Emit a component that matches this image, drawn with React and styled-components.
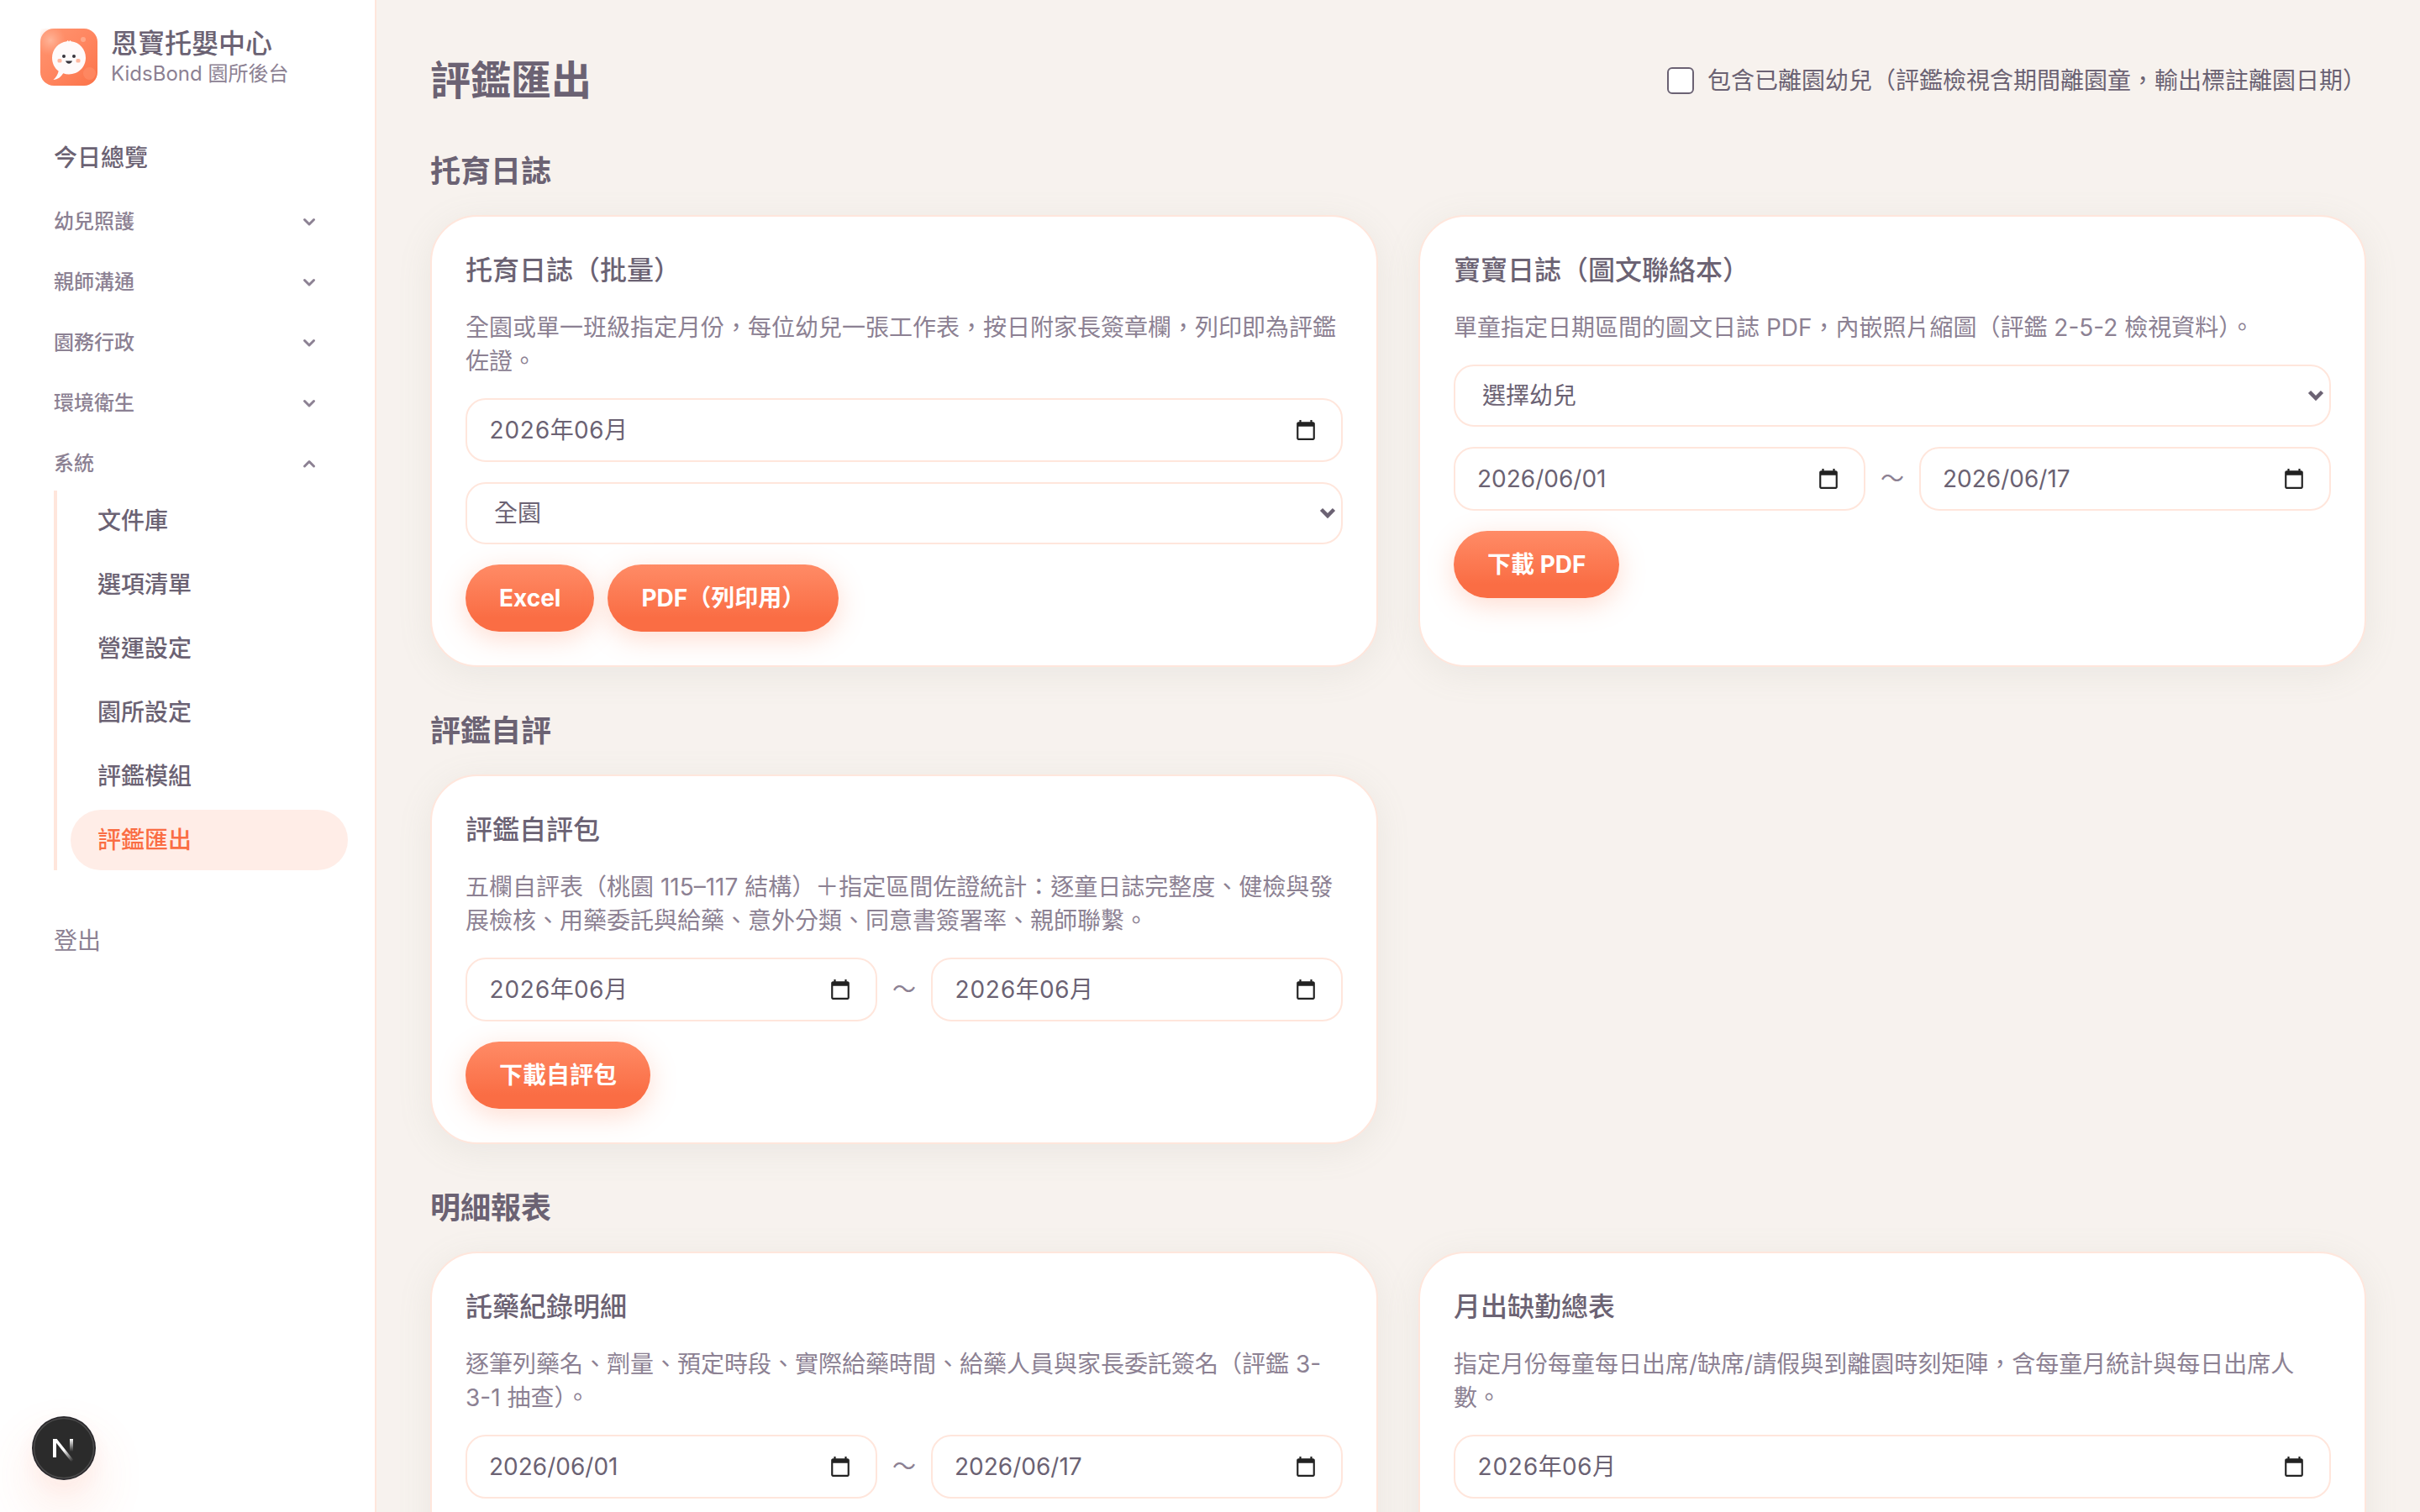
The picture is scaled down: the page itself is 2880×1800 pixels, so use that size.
import { useState } from "react"
import styled, { createGlobalStyle, css } from "styled-components"

const colors = {
  text: "#6b6273",
  muted: "#8c8193",
  page: "#f7f2ee",
  line: "#ffe6dc",
  activeBg: "#ffede7",
  primary: "#fa6d44",
  primaryLight: "#ff8b66",
  ink: "#222222",
}

const GlobalStyle = createGlobalStyle`
  *, *::before, *::after {
    box-sizing: border-box;
  }
  html {
    scrollbar-width: none;
  }
  body {
    margin: 0;
    background: ${colors.page};
    color: ${colors.text};
    font-family: Inter, "Noto Sans CJK TC", sans-serif;
    font-size: 28px;
    line-height: 40px;
    -webkit-font-smoothing: antialiased;
  }
  button, input, select {
    font: inherit;
    color: inherit;
  }
`

const Layout = styled.div`
  display: flex;
  align-items: flex-start;
  min-height: 100vh;
`

/* Sidebar */

const Sidebar = styled.aside`
  position: sticky;
  top: 0;
  flex: none;
  width: 448px;
  height: 100vh;
  padding: 32px;
  background: white;
  border-right: 2px solid ${colors.line};
`

const Brand = styled.div`
  display: flex;
  align-items: center;
  gap: 16px;
  padding: 0 16px;
  margin-bottom: 48px;
`

const BrandName = styled.div`
  font-size: 32px;
  line-height: 40px;
  font-weight: 500;
`

const BrandSub = styled.div`
  font-size: 24px;
  line-height: 32px;
  color: ${colors.muted};
`

const Nav = styled.nav`
  display: flex;
  flex-direction: column;
  gap: 8px;
`

const NavItem = styled.a`
  display: flex;
  align-items: center;
  height: 72px;
  padding: 0 32px;
  border-radius: 36px;
  font-weight: 500;
  text-decoration: none;
  color: ${({ $active }) => ($active ? colors.primary : colors.text)};
  background: ${({ $active }) => ($active ? colors.activeBg : "transparent")};
`

const GroupToggle = styled.button`
  display: flex;
  align-items: center;
  justify-content: space-between;
  width: 100%;
  height: 64px;
  padding: 0 32px;
  border: none;
  background: none;
  font-size: 24px;
  font-weight: 500;
  color: ${colors.muted};
  cursor: pointer;
`

const SubNav = styled.div`
  display: flex;
  flex-direction: column;
  gap: 4px;
  margin-left: 32px;
  padding-left: 16px;
  border-left: 4px solid ${colors.line};
`

const Logout = styled.button`
  display: block;
  height: 72px;
  margin-top: 48px;
  padding: 0 32px;
  border: none;
  background: none;
  color: ${colors.muted};
  cursor: pointer;
`

/* Content */

const Main = styled.main`
  flex: 1;
  min-width: 0;
  display: flex;
  flex-direction: column;
  gap: 48px;
  padding: 64px;
`

const Header = styled.header`
  display: flex;
  align-items: center;
  justify-content: space-between;
`

const PageTitle = styled.h1`
  margin: 0;
  font-size: 48px;
  line-height: 64px;
  font-weight: 600;
`

const CheckLabel = styled.label`
  display: flex;
  align-items: center;
  gap: 16px;
`

const Checkbox = styled.input`
  appearance: none;
  width: 32px;
  height: 32px;
  margin: 0;
  border: 2px solid ${colors.text};
  border-radius: 6px;
  background: white;
  &:checked {
    background: ${colors.primary};
  }
`

const SectionTitle = styled.h2`
  margin: 0 0 24px;
  font-size: 36px;
  line-height: 56px;
  font-weight: 600;
`

const CardGrid = styled.div`
  display: grid;
  grid-template-columns: repeat(2, minmax(0, 1fr));
  gap: 48px;
`

const Card = styled.article`
  display: flex;
  flex-direction: column;
  gap: 24px;
  min-height: 440px;
  padding: 40px;
  border: 2px solid ${colors.line};
  border-radius: 56px;
  background: white;
  box-shadow: 0 8px 40px rgba(150, 160, 140, 0.12);
`

const CardTitle = styled.h3`
  margin: 0;
  font-size: 32px;
  line-height: 48px;
  font-weight: 500;
`

const CardText = styled.p`
  margin: 0;
  color: ${colors.muted};
`

const fieldBox = css`
  border: 2px solid ${colors.line};
  border-radius: 24px;
  background: white;
`

const DateBox = styled.span`
  ${fieldBox}
  flex: 1;
  min-width: 0;
  display: flex;
  align-items: center;
  height: 76px;
  padding: 0 24px;
`

const DateInput = styled.input`
  flex: 1;
  min-width: 0;
  padding: 0 2px;
  border: none;
  outline: none;
  background: none;
  font-variant-numeric: ${({ $month }) => ($month ? "tabular-nums" : "normal")};
`

const PickerButton = styled.button`
  display: flex;
  padding: 0 5px;
  border: none;
  background: none;
  cursor: pointer;
`

const SelectBox = styled.span`
  display: grid;
  align-items: center;
  & > * {
    grid-area: 1 / 1;
  }
  & > svg {
    justify-self: end;
    margin-right: 8px;
    pointer-events: none;
  }
`

const SelectInput = styled.select`
  ${fieldBox}
  appearance: none;
  width: 100%;
  height: 74px;
  padding: 0 32px;
`

const FieldRow = styled.div`
  display: flex;
  align-items: center;
  gap: 16px;
`

const Tilde = styled.span`
  width: 32px;
  text-align: center;
  color: ${colors.muted};
`

const ButtonRow = styled.div`
  display: flex;
  gap: 16px;
`

const PrimaryButton = styled.button`
  height: 80px;
  padding: 0 40px;
  border: none;
  border-radius: 40px;
  background: linear-gradient(${colors.primaryLight}, ${colors.primary} 80%);
  box-shadow: 0 8px 32px rgba(255, 128, 85, 0.28);
  color: white;
  font-weight: 700;
  cursor: pointer;
`

const DevBadge = styled.button`
  position: fixed;
  left: 38px;
  bottom: 38px;
  display: flex;
  padding: 0;
  border: none;
  border-radius: 50%;
  background: none;
  box-shadow: 0 32px 64px rgba(250, 109, 68, 0.16), 0 8px 32px rgba(250, 109, 68, 0.06);
`

function Chevron({ open }) {
  return (
    <svg width="28" height="28" viewBox="0 0 28 28" fill="none" stroke="currentColor"
      strokeWidth="3" strokeLinecap="round" strokeLinejoin="round" aria-hidden="true">
      <path d={open ? "M8.500 17l5.500-5.500 5.500 5.500" : "M8.500 11.500l5.500 5.500 5.500-5.500"} />
    </svg>
  )
}

function Logo() {
  return (
    <svg width="68" height="68" viewBox="0 0 68 68" aria-hidden="true">
      <defs>
        <linearGradient id="tile" x1="0" y1="0" x2="1" y2="1">
          <stop offset="0" stopColor="#ff9671" />
          <stop offset="0.5" stopColor="#ff8660" />
          <stop offset="1" stopColor="#fb7349" />
        </linearGradient>
        <radialGradient id="glow">
          <stop offset="0" stopColor="#ffc1a8" stopOpacity="0.75" />
          <stop offset="1" stopColor="#ffb094" stopOpacity="0" />
        </radialGradient>
      </defs>
      <rect width="68" height="68" rx="16" fill="url(#tile)" />
      <circle cx="12" cy="14" r="18" fill="url(#glow)" />
      <circle cx="51" cy="13" r="3" fill="#ffb598" opacity="0.7" />
      <circle cx="58.500" cy="53.500" r="7.500" fill="#ff8f6b" opacity="0.6" />
      <path
        d="M31.500 15.200l1.200-1.200 1.300 1.600 1.500-1.600 1.200 1.200C46.800 16.300 54 24.600 54 34.800 54 46 45.200 54.500 34 54.500c-2.400 0-4.700-.4-6.800-1.200C24.600 57.800 20.600 60.800 15.500 61c3.200-2.900 5.300-6.300 6.200-10.200C17 47.200 14 41.400 14 34.800c0-10.200 7.500-18.300 17.500-19.600z"
        fill="#fffafa"
      />
      <circle cx="28" cy="33" r="2" fill="#38343c" />
      <circle cx="40" cy="33" r="2" fill="#38343c" />
      <rect x="20.500" y="36" width="5" height="4.500" rx="1.500" fill="#ffb8a0" />
      <rect x="42.500" y="36" width="5" height="4.500" rx="1.500" fill="#ffb8a0" />
      <path d="M30 38.500h8c-.6 2-2.100 3.200-4 3.200s-3.400-1.200-4-3.200z" fill="#38343c" />
    </svg>
  )
}

function NextMark() {
  return (
    <svg width="76" height="76" viewBox="0 0 76 76" aria-hidden="true">
      <defs>
        <linearGradient id="diag" x1="38" y1="40" x2="49" y2="53" gradientUnits="userSpaceOnUse">
          <stop stopColor="white" />
          <stop offset="1" stopColor="white" stopOpacity="0" />
        </linearGradient>
        <linearGradient id="stem" x1="0" y1="27" x2="0" y2="42" gradientUnits="userSpaceOnUse">
          <stop stopColor="white" />
          <stop offset="1" stopColor="white" stopOpacity="0" />
        </linearGradient>
      </defs>
      <circle cx="38" cy="38" r="38" fill="#29272b" />
      <circle cx="38" cy="38" r="35.500" fill="#2b2b2b" stroke="#4a4a4a" strokeWidth="1.500" />
      <path d="M25 49V27h4.600l20 25.200-2.800 2L29 31.800V49z" fill="url(#diag)" />
      <rect x="45" y="27" width="4" height="15" fill="url(#stem)" />
    </svg>
  )
}

function DateField({ label, value, month }) {
  return (
    <DateBox>
      <DateInput aria-label={label} defaultValue={value} $month={month} />
      <PickerButton type="button" aria-label="開啟日曆">
        <svg width="26" height="26" viewBox="0 0 24 24" fill={colors.ink} aria-hidden="true">
          <path d="M20 3h-1V1h-2v2H7V1H5v2H4c-1.100 0-2 .9-2 2v16c0 1.100.9 2 2 2h16c1.100 0 2-.9 2-2V5c0-1.100-.9-2-2-2zm0 18H4V8h16v13z" />
        </svg>
      </PickerButton>
    </DateBox>
  )
}

function RangeField({ from, to, month }) {
  return (
    <FieldRow>
      <DateField label="開始" value={from} month={month} />
      <Tilde>～</Tilde>
      <DateField label="結束" value={to} month={month} />
    </FieldRow>
  )
}

function SelectField({ label, option }) {
  return (
    <SelectBox>
      <SelectInput aria-label={label}>
        <option>{option}</option>
      </SelectInput>
      <svg width="20" height="14" viewBox="0 0 20 14" fill="none" stroke={colors.text} strokeWidth="4.500" aria-hidden="true">
        <path d="M2.500 2.500L10 10l7.500-7.500" />
      </svg>
    </SelectBox>
  )
}

function ExportCard({ title, text, children }) {
  return (
    <Card>
      <CardTitle>{title}</CardTitle>
      <CardText>{text}</CardText>
      {children}
    </Card>
  )
}

const closedGroups = ["幼兒照護", "親師溝通", "園務行政", "環境衛生"]
const systemPages = ["文件庫", "選項清單", "營運設定", "園所設定", "評鑑模組", "評鑑匯出"]

function App() {
  const [includeLeft, setIncludeLeft] = useState(false)
  const [systemOpen, setSystemOpen] = useState(true)

  return (
    <>
      <GlobalStyle />
      <Layout>
        <Sidebar>
          <Brand>
            <Logo />
            <div>
              <BrandName>恩寶托嬰中心</BrandName>
              <BrandSub>KidsBond 園所後台</BrandSub>
            </div>
          </Brand>
          <Nav>
            <NavItem href="#today">今日總覽</NavItem>
            {closedGroups.map((group) => (
              <GroupToggle key={group} type="button" aria-expanded="false">
                {group}
                <Chevron />
              </GroupToggle>
            ))}
            <div>
              <GroupToggle
                type="button"
                aria-expanded={systemOpen}
                onClick={() => setSystemOpen(!systemOpen)}
              >
                系統
                <Chevron open={systemOpen} />
              </GroupToggle>
              {systemOpen && (
                <SubNav>
                  {systemPages.map((page) => (
                    <NavItem key={page} href="#system" $active={page === "評鑑匯出"}>
                      {page}
                    </NavItem>
                  ))}
                </SubNav>
              )}
            </div>
          </Nav>
          <Logout type="button">登出</Logout>
        </Sidebar>

        <Main>
          <Header>
            <PageTitle>評鑑匯出</PageTitle>
            <CheckLabel>
              <Checkbox
                type="checkbox"
                checked={includeLeft}
                onChange={(e) => setIncludeLeft(e.target.checked)}
              />
              包含已離園幼兒（評鑑檢視含期間離園童，輸出標註離園日期）
            </CheckLabel>
          </Header>

          <section>
            <SectionTitle>托育日誌</SectionTitle>
            <CardGrid>
              <ExportCard
                title="托育日誌（批量）"
                text="全園或單一班級指定月份，每位幼兒一張工作表，按日附家長簽章欄，列印即為評鑑佐證。"
              >
                <FieldRow>
                  <DateField label="月份" value="2026年06月" month />
                </FieldRow>
                <SelectField label="班級" option="全園" />
                <ButtonRow>
                  <PrimaryButton type="button">Excel</PrimaryButton>
                  <PrimaryButton type="button">PDF（列印用）</PrimaryButton>
                </ButtonRow>
              </ExportCard>
              <ExportCard
                title="寶寶日誌（圖文聯絡本）"
                text="單童指定日期區間的圖文日誌 PDF，內嵌照片縮圖（評鑑 2-5-2 檢視資料）。"
              >
                <SelectField label="幼兒" option="選擇幼兒" />
                <RangeField from="2026/06/01" to="2026/06/17" />
                <ButtonRow>
                  <PrimaryButton type="button">下載 PDF</PrimaryButton>
                </ButtonRow>
              </ExportCard>
            </CardGrid>
          </section>

          <section>
            <SectionTitle>評鑑自評</SectionTitle>
            <CardGrid>
              <ExportCard
                title="評鑑自評包"
                text="五欄自評表（桃園 115–117 結構）＋指定區間佐證統計：逐童日誌完整度、健檢與發展檢核、用藥委託與給藥、意外分類、同意書簽署率、親師聯繫。"
              >
                <RangeField from="2026年06月" to="2026年06月" month />
                <ButtonRow>
                  <PrimaryButton type="button">下載自評包</PrimaryButton>
                </ButtonRow>
              </ExportCard>
            </CardGrid>
          </section>

          <section>
            <SectionTitle>明細報表</SectionTitle>
            <CardGrid>
              <ExportCard
                title="託藥紀錄明細"
                text="逐筆列藥名、劑量、預定時段、實際給藥時間、給藥人員與家長委託簽名（評鑑 3-3-1 抽查）。"
              >
                <RangeField from="2026/06/01" to="2026/06/17" />
              </ExportCard>
              <ExportCard
                title="月出缺勤總表"
                text="指定月份每童每日出席/缺席/請假與到離園時刻矩陣，含每童月統計與每日出席人數。"
              >
                <FieldRow>
                  <DateField label="月份" value="2026年06月" month />
                </FieldRow>
              </ExportCard>
            </CardGrid>
          </section>
        </Main>
      </Layout>
      <DevBadge type="button" aria-label="Next.js">
        <NextMark />
      </DevBadge>
    </>
  )
}

export default App
